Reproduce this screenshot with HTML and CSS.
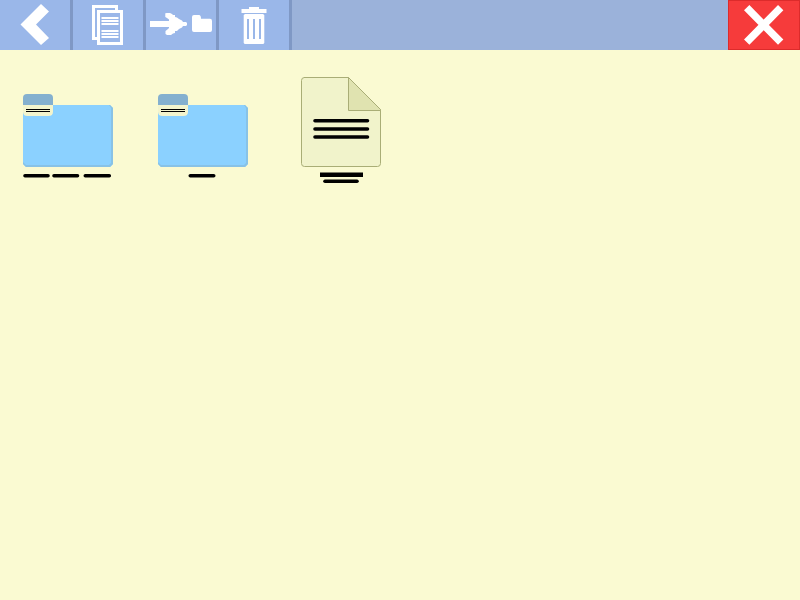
FILE: index.html
```html
<!DOCTYPE html>
<html lang="en">
<head>
<meta charset="utf-8">
<title>Files</title>
<link rel="stylesheet" href="styles.css">
</head>
<body>
<header class="toolbar">
  <button class="tool" aria-label="Back">
    <svg class="tool-icon" viewBox="0 0 70 50"><path d="M41 4 49 11.5 36 24.5 49 38 41 45 20.5 24.5Z"/></svg>
  </button>
  <button class="tool" aria-label="Copy">
    <svg class="tool-icon crisp" viewBox="73 0 70 50">
      <path d="M92 5H118V10H115V8H95V37H97V40H92Z"/>
      <path fill-rule="evenodd" d="M97 10H123V45H97ZM100 13V42H120V13Z"/>
      <path opacity=".5" d="M101 17H119V19H101ZM101 20H119V22H101ZM101 23H119V25H101ZM101 30H119V32H101ZM101 33H119V35H101ZM101 36H119V38H101Z"/>
      <path d="M102 17H118V19H102ZM102 20H118V22H102ZM102 23H118V25H102ZM102 30H118V32H102ZM102 33H118V35H102ZM102 36H118V38H102Z"/>
    </svg>
  </button>
  <button class="tool" aria-label="Move to folder">
    <svg class="tool-icon" viewBox="146 0 70 50">
      <path d="M150 21H169V19.5L167 18 165.3 17V13.3L167 13H170L172 14 173 15H175V17L177 17.5 179 19 182 20.5 183 22H186L187 23V25L186 26H183L182 27.5 179 29 177 31H175V33L173 33.5 171 35H167L165.5 34V31L168 29 169 28V27H150Z"/>
      <path d="M192 17Q192 15 194 15H199Q201 15 201 18.7H210Q212 18.7 212 21V30Q212 32 210 32H194Q192 32 192 30Z"/>
    </svg>
  </button>
  <button class="tool" aria-label="Delete">
    <svg class="tool-icon" viewBox="219 0 70 50">
      <path d="M249 7H259V9H266.5V13H241.5V9H249Z"/>
      <path fill-rule="evenodd" d="M245 14H263L264.3 15V43L263.3 44H244.7L243.7 43V15ZM247 19V39H249V19ZM253 19V39H255V19ZM259 19V39H261V19Z"/>
    </svg>
  </button>
  <button class="close" aria-label="Close">
    <svg class="close-icon" viewBox="729 1 70 48"><path d="M746.7 7.7 780.7 42.2M780.7 7.7 746.7 42.2"/></svg>
  </button>
</header>
<main class="files">
  <svg class="folder" viewBox="23 77 90 110">
    <path class="folder-body" d="M23 105H110L113 108V164L110 167H26L23 164Z"/>
    <path class="folder-shade" d="M109 105H110L113 108V164L110 167H26L23 164V162L26 165H109L111 163V108Z"/>
    <path class="folder-tab" d="M23 105V98Q23 94 27 94H49Q53 94 53 98V105Z"/>
    <path class="folder-paper" d="M23 105H53V111.5Q53 116 48.5 116H27.5Q23 116 23 111.5Z"/>
    <path class="ink crisp" d="M26 109H50V110H26ZM26 111H50V112H26Z"/>
    <path class="label-line" d="M25 175.7H48M54 175.7H77.5M85.3 175.7H109.3"/>
  </svg>
  <svg class="folder" viewBox="158 77 90 110">
    <path class="folder-body" d="M158 105H245L248 108V164L245 167H161L158 164Z"/>
    <path class="folder-shade" d="M244 105H245L248 108V164L245 167H161L158 164V162L161 165H244L246 163V108Z"/>
    <path class="folder-tab" d="M158 105V98Q158 94 162 94H184Q188 94 188 98V105Z"/>
    <path class="folder-paper" d="M158 105H188V111.5Q188 116 183.5 116H162.5Q158 116 158 111.5Z"/>
    <path class="ink crisp" d="M161 109H185V110H161ZM161 111H185V112H161Z"/>
    <path class="label-line" d="M190.3 175.7H213.7"/>
  </svg>
  <svg class="document" viewBox="301 77 80 110">
    <path class="page" d="M304 77.5H348.5L380.5 109.5V163.5Q380.5 166.5 377.5 166.5H304.5Q301.5 166.5 301.5 163.5V80.5Q301.5 77.5 304.5 77.5Z"/>
    <path class="fold" d="M348.5 77.5V110.5H380.5V109.5Z"/>
    <path class="text-line" d="M315 120.8H367.5M315 129H367.5M315 137H367.5"/>
    <path class="ink" d="M320 172.5H363V177H320Z"/>
    <path class="text-line" d="M325 181.3H357"/>
  </svg>
</main>
</body>
</html>
```

FILE: styles.css
```css
body {
  margin: 0;
  min-height: 100vh;
  background: #fafad2;
}

svg {
  display: block;
}

.toolbar {
  display: flex;
  height: 50px;
  background: #9bb2da;
}

.tool {
  box-sizing: border-box;
  width: 73px;
  height: 50px;
  padding: 0;
  border: 0;
  border-right: 3px solid #7f98c5;
  background: #9ab7e9;
}

.tool-icon {
  width: 70px;
  height: 50px;
  fill: #fff;
}

.crisp {
  shape-rendering: crispEdges;
}

.close {
  box-sizing: border-box;
  width: 72px;
  height: 50px;
  margin-left: auto;
  padding: 0;
  border: 1px solid #dc2b2b;
  background: #f63b3b;
}

.close-icon {
  width: 70px;
  height: 48px;
  fill: none;
  stroke: #fff;
  stroke-width: 7.5;
}

.files {
  display: flex;
  gap: 45px;
  padding: 27px 23px;
}

.folder {
  width: 90px;
  height: 110px;
}

.document {
  width: 80px;
  height: 110px;
  margin-left: 8px;
}

.folder-body {
  fill: #8bd1ff;
}

.folder-shade {
  fill: #88c2e6;
}

.folder-tab {
  fill: #84b0cf;
}

.folder-paper {
  fill: #f3f4cd;
}

.ink {
  fill: #000;
}

.label-line,
.text-line {
  fill: none;
  stroke: #000;
  stroke-width: 3.6;
  stroke-linecap: round;
}

.page {
  fill: #f1f3cb;
  stroke: #a9ad76;
}

.fold {
  fill: #e0e3b0;
  stroke: #a9ad76;
}
```
